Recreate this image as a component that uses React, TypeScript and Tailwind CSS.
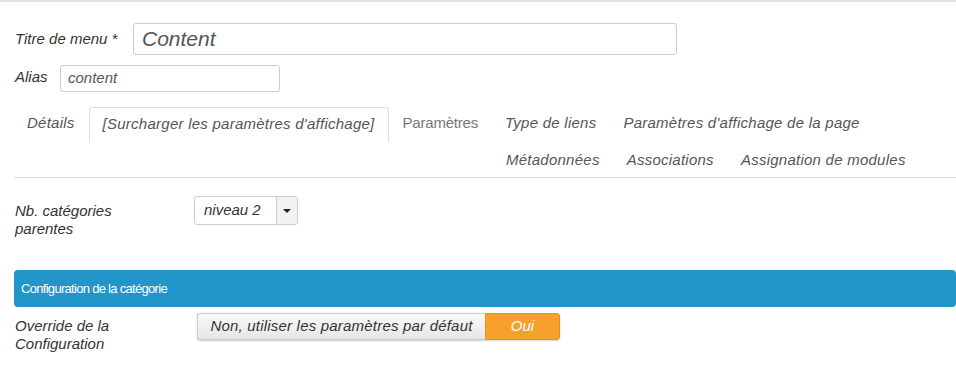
import React from "react";

const labelClass = "italic text-[15px] leading-[18px] text-[#333]";

const tabsRow1 = ["Détails", "[Surcharger les paramètres d'affichage]", "Paramètres", "Type de liens", "Paramètres d'affichage de la page"];
const tabsRow2 = ["Métadonnées", "Associations", "Assignation de modules"];

function Tab({ label, active }: { label: string; active?: boolean }) {
  const plain = label === "Paramètres";
  return (
    <div
      className={
        "flex items-center px-[13px] mr-px h-full text-[15px] " +
        (plain ? "not-italic text-[#777] tracking-[-0.2px] " : "italic text-[#555] tracking-[0.25px] ") +
        (active ? "border border-[#ddd] border-b-white rounded-t-[4px] bg-white -mb-px h-[36px]" : "")
      }
    >
      {label}
    </div>
  );
}

export default function App() {
  return (
    <div className="w-[956px] h-[368px] overflow-hidden bg-white border-t-2 border-[#e3e3e3] font-['Liberation_Sans',Arial,sans-serif]">
      <div className="pl-[15px] pt-[21px]">
        <div className="flex items-center">
          <label className={`${labelClass} w-[118px]`}>Titre de menu *</label>
          <div className="w-[544px] h-[32px] border border-[#ccc] rounded-[3px] flex items-center px-[8px] italic text-[21px] text-[#555]">
            Content
          </div>
        </div>
        <div className="flex items-center mt-[10px]">
          <label className={`${labelClass} w-[45px] -mt-[4px]`}>Alias</label>
          <div className="w-[220px] h-[27px] border border-[#ccc] rounded-[3px] flex items-center px-[7px] italic text-[15px] text-[#555]">
            content
          </div>
        </div>
      </div>

      <div className="ml-[14px] mt-[14px] border-b border-[#ddd]">
        <div className="flex h-[35px] items-end">
          {tabsRow1.map((t, i) => (
            <Tab key={t} label={t} active={i === 1} />
          ))}
        </div>
        <div className="flex h-[36px] pl-[479px] pt-[2px]">
          {tabsRow2.map((t) => (
            <Tab key={t} label={t} />
          ))}
        </div>
      </div>

      <div className="flex items-start pl-[15px] mt-[18px]">
        <label className={`${labelClass} w-[179px] mt-[6px]`}>
          Nb. catégories
          <br />
          parentes
        </label>
        <div className="flex w-[104px] h-[29px] border border-[#ccc] rounded-[3px] overflow-hidden">
          <div className="flex-1 flex items-center pl-[9px] italic text-[15px] text-[#333]">niveau 2</div>
          <div className="w-[21px] border-l border-[#ccc] bg-[#f2f2f2] flex items-center justify-center">
            <div className="w-0 h-0 border-l-[4px] border-r-[4px] border-t-[4px] border-l-transparent border-r-transparent border-t-[#222]" />
          </div>
        </div>
      </div>

      <div className="ml-[14px] mt-[32px] w-[942px] h-[37px] rounded-[4px] bg-[#2295c9] flex items-center pl-[7px] text-white text-[13px] tracking-[-0.7px]">
        Configuration de la catégorie
      </div>

      <div className="flex items-start pl-[15px] mt-[6px]">
        <label className={`${labelClass} w-[182px] mt-[4px]`}>
          Override de la
          <br />
          Configuration
        </label>
        <div className="flex h-[27px] rounded-[3px] shadow-[0_1px_2px_rgba(0,0,0,0.2)]">
          <div className="w-[288px] flex items-center justify-center border border-[#ccc] border-r-0 rounded-l-[3px] bg-gradient-to-b from-[#fafafa] to-[#e6e6e6] italic text-[15px] tracking-[0.2px] text-[#333]">
            Non, utiliser les paramètres par défaut
          </div>
          <div className="w-[75px] flex items-center justify-center rounded-r-[3px] bg-[#f7a12c] border border-[#e8911c] italic text-[15px] text-white">
            Oui
          </div>
        </div>
      </div>
    </div>
  );
}
